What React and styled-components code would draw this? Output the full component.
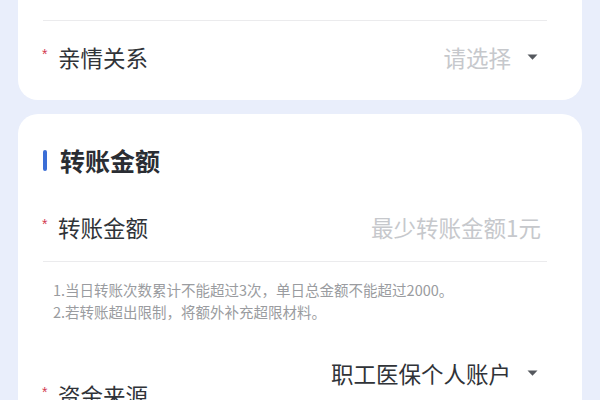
import React from "react";
import styled, { createGlobalStyle } from "styled-components";

const Global = createGlobalStyle`
  html, body { margin: 0; padding: 0; background: #e9eefb; }
  body { font-family: "Noto Sans CJK SC", "Noto Sans", sans-serif; }
`;

const Page = styled.div`
  width: 600px;
  height: 400px;
  overflow: hidden;
  box-sizing: border-box;
  padding: 0 18px;
  display: flex;
  flex-direction: column;
  gap: 14px;
`;

const Card = styled.section`
  background: #ffffff;
  border-radius: ${(p) => (p.$cut ? "0 0 20px 20px" : "20px")};
  padding: ${(p) => p.$pad};
  display: flex;
  flex-direction: column;
  flex-shrink: 0;
`;

const Divider = styled.div`
  height: 1px;
  background: #ebebed;
  margin-right: 10px;
`;

const Row = styled.div`
  display: flex;
  align-items: ${(p) => (p.$top ? "flex-start" : "center")};
  justify-content: space-between;
  height: ${(p) => p.$h}px;
  padding-right: ${(p) => p.$pr || 0}px;
`;

const Label = styled.div`
  display: flex;
  align-items: flex-start;
  font-size: 22.5px;
  line-height: 30px;
  color: #303338;
  padding-top: ${(p) => p.$offset || 0}px;
`;

const Star = styled.span`
  width: 16px;
  margin-left: -1px;
  font-size: 14px;
  line-height: 24px;
  color: #d23a50;
  font-family: "Liberation Sans", sans-serif;
`;

const Value = styled.div`
  display: flex;
  align-items: center;
  gap: 16px;
  font-size: 22.5px;
  line-height: 30px;
  color: ${(p) => (p.$placeholder ? "#c6c8cc" : "#303338")};
`;

const Caret = styled.svg`
  width: 11px;
  height: 6px;
  flex-shrink: 0;
`;

const Heading = styled.h2`
  display: flex;
  align-items: center;
  gap: 13px;
  margin: 0 0 17px 0;
  font-size: 25px;
  line-height: 32px;
  font-weight: 700;
  color: #2a2d33;
`;

const Bar = styled.span`
  width: 4px;
  height: 21px;
  border-radius: 2px;
  background: #3b6ed6;
`;

const Notes = styled.div`
  margin: 17px 0 0 10px;
  font-size: 14.5px;
  line-height: 22px;
  color: #9a9ca0;
`;

const Down = () => (
  <Caret viewBox="0 0 11 6">
    <path d="M0.5 0.5 H10.5 L5.5 5.8 Z" fill="#55585e" />
  </Caret>
);

export default function App() {
  return (
    <>
      <Global />
      <Page>
        <Card $cut $pad="20px 25px 7px 25px">
          <Divider />
          <Row $h={72} $pr={19}>
            <Label>
              <Star>*</Star>亲情关系
            </Label>
            <Value $placeholder>
              请选择
              <Down />
            </Value>
          </Row>
        </Card>
        <Card $pad="30px 25px 0 25px">
          <Heading>
            <Bar />
            转账金额
          </Heading>
          <Row $h={68} $pr={16}>
            <Label>
              <Star>*</Star>转账金额
            </Label>
            <Value $placeholder>最少转账金额1元</Value>
          </Row>
          <Divider />
          <Notes>
            1.当日转账次数累计不能超过3次，单日总金额不能超过2000。
            <br />
            2.若转账超出限制，将额外补充超限材料。
          </Notes>
          <Row $top $h={80} $pr={19} style={{ marginTop: 35 }}>
            <Label $offset={22}>
              <Star>*</Star>资金来源
            </Label>
            <Value>
              职工医保个人账户
              <Down />
            </Value>
          </Row>
        </Card>
      </Page>
    </>
  );
}
